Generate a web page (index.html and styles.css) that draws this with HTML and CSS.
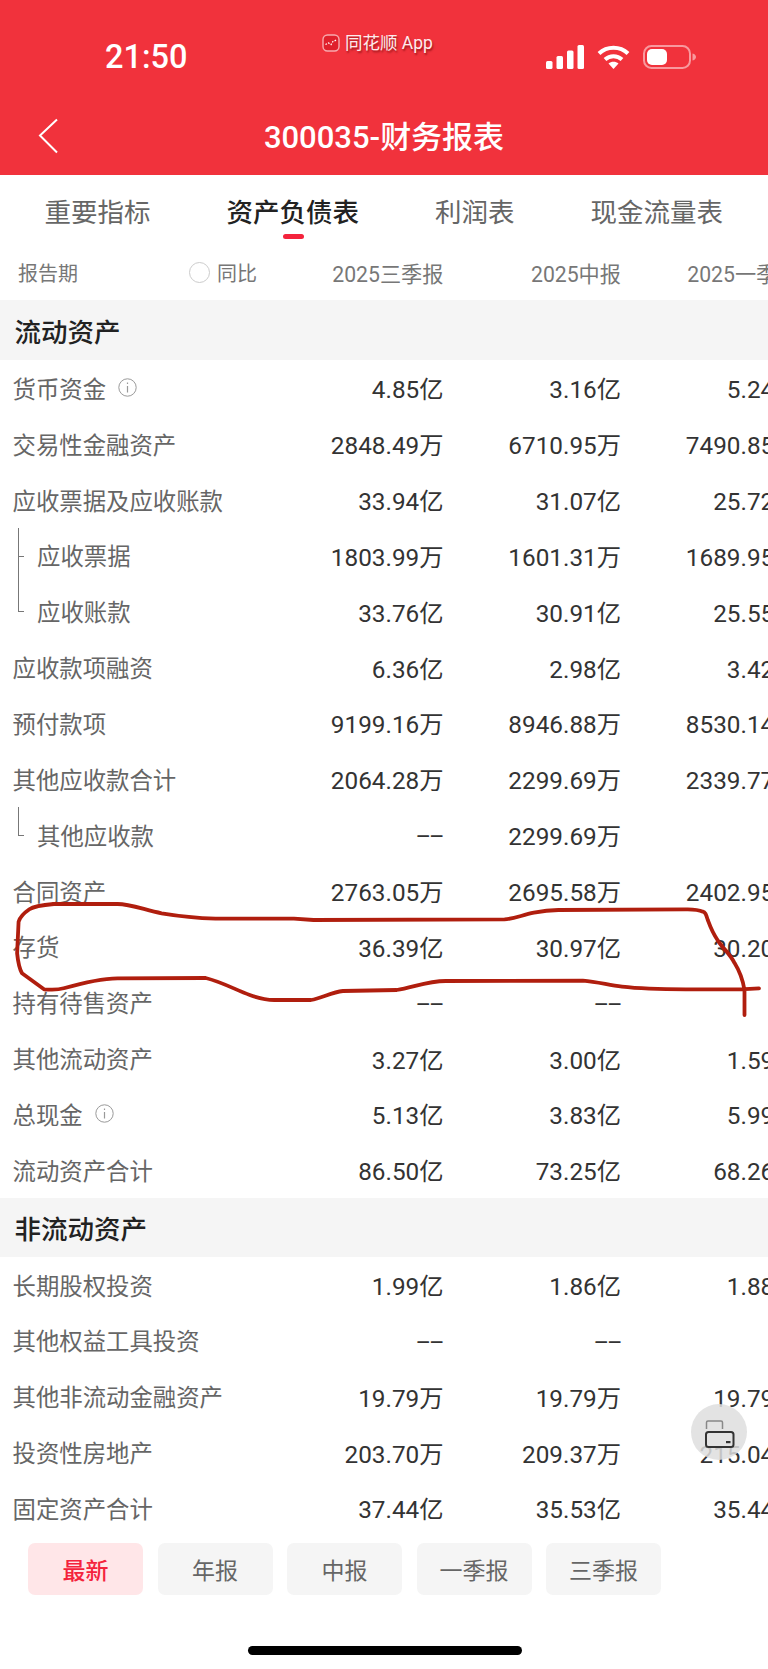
FILE: index.html
```html
<!DOCTYPE html>
<html lang="zh-CN">
<head>
<meta charset="utf-8">
<title>300035-财务报表</title>
<link rel="stylesheet" href="styles.css">
</head>
<body>
<div class="page">
  <header class="header">
    <div class="status">
      <span class="time">21:50</span>
      <span class="app">
        <svg class="app-logo" width="18" height="18" viewBox="0 0 18 18"><rect x="1" y="1" width="16" height="16" rx="4.5" fill="#e0202c" stroke="#f7a9ad" stroke-width="1.4"/><path d="M3.5 10.5l3-1.5 2.5 1.5 2-3 3.500-1.500" fill="none" stroke="#fff" stroke-width="1.300" stroke-dasharray="1.600 1.300"/></svg>
        <span class="app-name">同花顺 App</span>
      </span>
      <span class="sys">
        <svg width="38" height="24" viewBox="0 0 38 24" fill="#fff"><rect x="0" y="16" width="6.500" height="8" rx="1.500"/><rect x="10.500" y="11" width="6.500" height="13" rx="1.500"/><rect x="21" y="5.500" width="6.500" height="18.500" rx="1.500"/><rect x="31.500" y="0" width="6.500" height="24" rx="1.500"/></svg>
        <svg class="wifi" width="33" height="24" viewBox="0 0 33 24" fill="none" stroke="#fff" stroke-width="4"><path d="M2 8.500C10 .8 23 .8 31 8.500"/><path d="M8 14.500c4.800-4.400 12.200-4.400 17 0"/><path d="M16.500 24l-5-5.500c2.800-2.400 7.200-2.400 10 0z" fill="#fff" stroke="none"/></svg>
        <svg class="battery" width="54" height="24" viewBox="0 0 54 24"><rect x="1" y="1" width="46" height="22" rx="7.500" fill="none" stroke="#fff" stroke-opacity=".5" stroke-width="2"/><rect x="4" y="4" width="20" height="16" rx="5" fill="#fff"/><path d="M49.500 8.500c2.500.6 3.500 2 3.500 3.500s-1 2.900-3.500 3.500z" fill="#fff" fill-opacity=".5"/></svg>
      </span>
    </div>
    <div class="nav">
      <svg class="back" width="21" height="36" viewBox="0 0 21 36"><path d="M19 1.500L2 17.500 19 34.500" fill="none" stroke="#fff" stroke-width="2"/></svg>
      <h1 class="title">300035-财务报表</h1>
    </div>
  </header>

  <nav class="tabs">
    <span class="tab">重要指标</span>
    <span class="tab tab-active">资产负债表</span>
    <span class="tab">利润表</span>
    <span class="tab">现金流量表</span>
  </nav>

  <div class="columns">
    <div class="period"><span class="period-name">报告期</span><span class="radio"></span><span>同比</span></div>
    <span class="col-head">2025三季报</span>
    <span class="col-head">2025中报</span>
    <span class="col-head">2025一季报</span>
  </div>

  <main class="table">
    <div class="section section-first">流动资产</div>
    <div class="row"><span class="label">货币资金<svg class="info" width="19" height="19" viewBox="0 0 19 19"><circle cx="9.500" cy="9.500" r="8.700" fill="none" stroke="#999" stroke-width="1"/><path d="M9.500 8v6.500M9.500 4.500v1.500" stroke="#999" stroke-width="1.200"/></svg></span><span class="val">4.85亿</span><span class="val">3.16亿</span><span class="val">5.24亿</span></div>
    <div class="row"><span class="label">交易性金融资产</span><span class="val">2848.49万</span><span class="val">6710.95万</span><span class="val">7490.85万</span></div>
    <div class="row"><span class="label">应收票据及应收账款</span><span class="val">33.94亿</span><span class="val">31.07亿</span><span class="val">25.72亿</span></div>
    <div class="row child child-mid"><span class="label">应收票据</span><span class="val">1803.99万</span><span class="val">1601.31万</span><span class="val">1689.95万</span></div>
    <div class="row child child-last"><span class="label">应收账款</span><span class="val">33.76亿</span><span class="val">30.91亿</span><span class="val">25.55亿</span></div>
    <div class="row"><span class="label">应收款项融资</span><span class="val">6.36亿</span><span class="val">2.98亿</span><span class="val">3.42亿</span></div>
    <div class="row"><span class="label">预付款项</span><span class="val">9199.16万</span><span class="val">8946.88万</span><span class="val">8530.14万</span></div>
    <div class="row"><span class="label">其他应收款合计</span><span class="val">2064.28万</span><span class="val">2299.69万</span><span class="val">2339.77万</span></div>
    <div class="row child child-only"><span class="label">其他应收款</span><span class="val"><span class="dash">--</span></span><span class="val">2299.69万</span><span class="val"><span class="dash">--</span></span></div>
    <div class="row"><span class="label">合同资产</span><span class="val">2763.05万</span><span class="val">2695.58万</span><span class="val">2402.95万</span></div>
    <div class="row"><span class="label">存货</span><span class="val">36.39亿</span><span class="val">30.97亿</span><span class="val">30.20亿</span></div>
    <div class="row"><span class="label">持有待售资产</span><span class="val"><span class="dash">--</span></span><span class="val"><span class="dash">--</span></span><span class="val"><span class="dash">--</span></span></div>
    <div class="row"><span class="label">其他流动资产</span><span class="val">3.27亿</span><span class="val">3.00亿</span><span class="val">1.59亿</span></div>
    <div class="row"><span class="label">总现金<svg class="info" width="19" height="19" viewBox="0 0 19 19"><circle cx="9.500" cy="9.500" r="8.700" fill="none" stroke="#999" stroke-width="1"/><path d="M9.500 8v6.500M9.500 4.500v1.500" stroke="#999" stroke-width="1.200"/></svg></span><span class="val">5.13亿</span><span class="val">3.83亿</span><span class="val">5.99亿</span></div>
    <div class="row"><span class="label">流动资产合计</span><span class="val">86.50亿</span><span class="val">73.25亿</span><span class="val">68.26亿</span></div>
    <div class="section">非流动资产</div>
    <div class="row"><span class="label">长期股权投资</span><span class="val">1.99亿</span><span class="val">1.86亿</span><span class="val">1.88亿</span></div>
    <div class="row"><span class="label">其他权益工具投资</span><span class="val"><span class="dash">--</span></span><span class="val"><span class="dash">--</span></span><span class="val"><span class="dash">--</span></span></div>
    <div class="row"><span class="label">其他非流动金融资产</span><span class="val">19.79万</span><span class="val">19.79万</span><span class="val">19.79万</span></div>
    <div class="row"><span class="label">投资性房地产</span><span class="val">203.70万</span><span class="val">209.37万</span><span class="val">215.04万</span></div>
    <div class="row"><span class="label">固定资产合计</span><span class="val">37.44亿</span><span class="val">35.53亿</span><span class="val">35.44亿</span></div>
  </main>

  <footer class="footer">
    <div class="filters">
      <span class="filter filter-active">最新</span>
      <span class="filter">年报</span>
      <span class="filter">中报</span>
      <span class="filter">一季报</span>
      <span class="filter">三季报</span>
    </div>
    <div class="home"></div>
  </footer>

  <div class="lock">
    <svg width="30" height="28" viewBox="0 0 30 28" fill="none" stroke="#333"><path d="M1.500 9V2.500q0-1.500 1.500-1.500h13q1.500 0 1.500 1.500V9" stroke="#888" stroke-width="1.500"/><rect x="1" y="12" width="27.500" height="15" rx="2.500" stroke-width="2"/><rect x="21" y="21" width="4.500" height="2.200" fill="#333" stroke="none"/></svg>
  </div>

  <svg class="scribble" width="768" height="1669" viewBox="0 0 768 1669">
    <path d="M744.500 1015L744.500 990C742 975 737 967 734.700 963.300C729 952 722 948 717.500 940C712 932 710 926 707.800 920C706 914 705 912 703 911.700C697 909 692 909.300 685.700 909.300L558.400 910C548 910 542 911 533.900 912.700C522 915 514 919 504.500 919.300L313.500 920L293.900 918.700L215.500 918.700C195 918 178 916 161.600 913.300C145 910 130 904 117.600 904L53.900 904C42 905 34 906 29.400 909.300C24 913 20 917 18.600 921.700L17.100 953.300C18 962 19 968 22 973.300L44 989.300C52 990 58 990 63.700 988.300C82 983 100 978.500 117.600 978.300L205.700 978C222 982 236 990 249.800 995C258 998 266 1000 274.300 1000L311 1000C322 998 332 992 342.900 991L396.700 990C414 987 428 981 445.700 981L582.900 980.700C598 982 608 985 622 986.700C642 989 664 989.300 685.700 989.300C710 989.500 735 990 759 988.300" fill="none" stroke="#b01e0e" stroke-width="3.800" stroke-linecap="round" stroke-linejoin="round"/>
  </svg>
</div>
</body>
</html>
```

FILE: styles.css
```css
* { box-sizing: border-box; }
html, body { margin: 0; padding: 0; background: #fff; }
body { font-family: Roboto, "Noto Sans CJK SC", sans-serif; overflow: hidden; }

.page {
  position: relative;
  width: 768px;
  height: 1669px;
  display: flex;
  flex-direction: column;
  overflow: hidden;
}

/* Header */
.header { height: 175px; flex: none; background: #f1323c; color: #fff; }
.status { height: 114px; display: flex; align-items: center; padding: 0 71px 0 105px; }
.time { font-size: 32.500px; font-weight: 500; line-height: 1; width: 82px; }
.app {
  align-self: flex-start;
  margin: 33px 0 0 135px;
  display: flex;
  align-items: center;
  gap: 5px;
}
.app-logo { display: block; }
.app-name {
  font-size: 17.500px;
  line-height: 20px;
  color: #fdeced;
  text-shadow: 1px 2px 2px rgba(90, 0, 0, .55);
  white-space: nowrap;
}
.sys { margin-left: auto; display: flex; align-items: center; }
.wifi { margin-left: 13px; }
.battery { margin-left: 13px; }

.nav {
  position: relative;
  height: 61px;
  padding-bottom: 13px;
  display: flex;
  align-items: center;
  justify-content: center;
}
.back { position: absolute; left: 38px; top: 4px; }
.title { margin: 0; font-size: 31px; font-weight: 500; line-height: 40px; }

/* Tabs */
.tabs {
  flex: none;
  height: 70px;
  display: flex;
  align-items: center;
  gap: 76px;
  padding-left: 44.500px;
  color: #666;
  font-size: 26.500px;
}
.tab { position: relative; white-space: nowrap; }
.tab-active { color: #222; font-weight: 500; }
.tab-active::after {
  content: "";
  position: absolute;
  left: 56px;
  width: 21px;
  height: 5px;
  bottom: -9px;
  border-radius: 2.500px;
  background: #f4233c;
}

/* Column heads */
.columns {
  flex: none;
  height: 55px;
  padding: 0 0 0 12.500px;
  display: grid;
  grid-template-columns: 253.500px 177.500px 177.500px 177.500px;
  align-items: center;
  font-size: 20px;
  color: #777;
}
.period { display: flex; align-items: center; }
.period-name { margin-left: 5.500px; width: 60px; }
.radio {
  width: 21px;
  height: 21px;
  margin: 0 7px 0 111px;
  border-radius: 50%;
  border: 1px solid #ccc;
}
.col-head { text-align: right; white-space: nowrap; font-size: 21.200px; }

/* Table */
.table { flex: 1; min-height: 0; overflow: hidden; }
.section {
  height: 59px;
  padding-left: 14.500px;
  display: flex;
  align-items: center;
  background: #f5f5f5;
  color: #222;
  font-size: 26.500px;
  font-weight: 500;
}
.section-first { height: 60px; }
.row {
  position: relative;
  height: 55.850px;
  padding-left: 12.500px;
  display: grid;
  grid-template-columns: 253.500px 177.500px 177.500px 177.500px;
  align-items: center;
}
.label {
  display: flex;
  align-items: center;
  font-size: 23.400px;
  color: #666;
  white-space: nowrap;
}
.info { margin-left: 12px; }
.val {
  text-align: right;
  font-size: 24.300px;
  color: #333;
  white-space: nowrap;
}
.dash { display: inline-block; transform: scaleX(2); transform-origin: right center; }

.child .label { padding-left: 24.500px; }
.child::before, .child::after { content: ""; position: absolute; left: 18px; background: #777; }
.child::before { width: 1px; }
.child::after { width: 6px; height: 1px; top: 28px; }
.child-mid::before { top: 0; height: 56px; }
.child-last::before { top: 0; height: 28px; }
.child-only::before { top: 0; height: 28px; }

/* Footer */
.footer { flex: none; height: 134px; background: #fff; padding: 8px 0 0 28px; }
.filters { display: flex; gap: 14.500px; }
.filter {
  width: 115px;
  height: 52px;
  display: flex;
  align-items: center;
  justify-content: center;
  border-radius: 7px;
  background: #f5f5f5;
  color: #666;
  font-size: 23px;
}
.filter-active { background: #ffe6e8; color: #f4233c; font-weight: 500; }
.home {
  width: 274px;
  height: 9px;
  margin: 51px 0 0 219.500px;
  border-radius: 5px;
  background: #000;
}

/* Overlays */
.lock {
  position: absolute;
  left: 691px;
  top: 1404px;
  width: 56px;
  height: 56px;
  border-radius: 50%;
  background: rgba(222, 222, 222, .85);
  display: flex;
  align-items: center;
  justify-content: center;
  padding: 4px 0 0 2px;
}
.scribble { position: absolute; left: 0; top: 0; pointer-events: none; }
```
